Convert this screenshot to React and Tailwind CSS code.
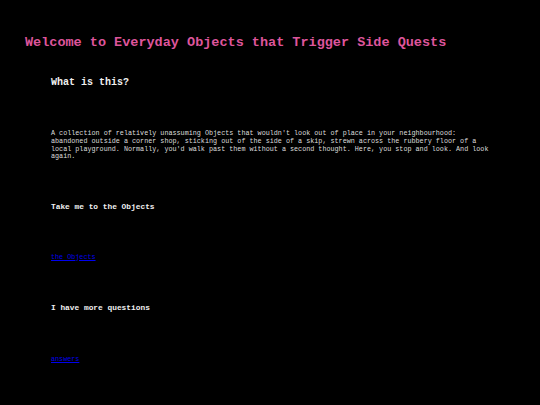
import React from "react";

export default function App() {
  return (
    <div className="min-h-[405px] w-full bg-black font-['Liberation_Mono','Courier_New',monospace] pl-[25px] pt-[35px]">
      <h1 className="text-[13.5px] leading-[15px] font-bold text-[#de559b]">
        Welcome to Everyday Objects that Trigger Side Quests
      </h1>

      <div className="pl-[26px]">
        <h2 className="mt-[27px] text-[10px] leading-[12px] font-bold text-[#f0f0f0]">
          What is this?
        </h2>
        <p className="mt-[41px] w-[440px] text-[6.75px] leading-[7.8px] text-[#dddddd]">
          A collection of relatively unassuming Objects that wouldn't look out of place in your neighbourhood: abandoned outside a corner shop, sticking out of the side of a skip, strewn across the rubbery floor of a local playground. Normally, you'd walk past them without a second thought. Here, you stop and look. And look again.
        </p>

        <h3 className="mt-[41px] text-[7.85px] leading-[9px] font-bold text-[#f0f0f0]">
          Take me to the Objects
        </h3>
        <a href="#" className="mt-[42.5px] block w-fit text-[6.75px] leading-[7.8px] text-[#0000ee] underline">
          the Objects
        </a>

        <h3 className="mt-[41.5px] text-[7.85px] leading-[9px] font-bold text-[#f0f0f0]">
          I have more questions
        </h3>
        <a href="#" className="mt-[44.5px] block w-fit text-[6.75px] leading-[7.8px] text-[#0000ee] underline">
          answers
        </a>
      </div>
    </div>
  );
}
